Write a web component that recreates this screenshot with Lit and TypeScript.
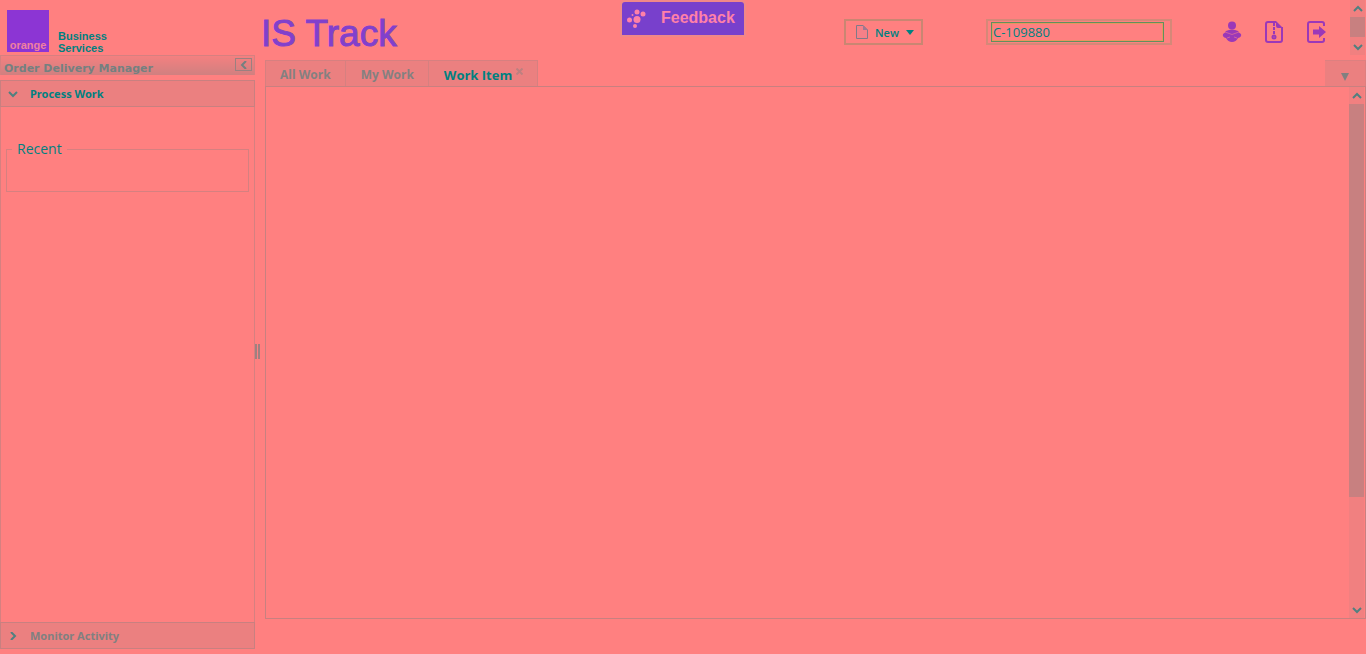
import { LitElement, html, css, svg } from "lit";
import { customElement, state } from "lit/decorators.js";
import { classMap } from "lit/directives/class-map.js";

const chevrons: Record<string, string> = {
  up: "M1 6L5 2L9 6",
  down: "M1 2L5 6L9 2",
  right: "M3 0L7 4L3 8",
  left: "M7 0L3 4L7 8",
};

const chevron = (dir: string) => html`
  <svg width="10" height="8" viewBox="0 0 10 8" aria-hidden="true">
    ${svg`<path d=${chevrons[dir]} fill="none" stroke="currentColor" stroke-width="2" />`}
  </svg>
`;

@customElement("scroll-rail")
export class ScrollRail extends LitElement {
  static styles = css`
    :host {
      display: flex;
      flex-direction: column;
      width: 15px;
      background: #f18080;
      color: #508080;
    }
    .arrow {
      display: flex;
      align-items: center;
      justify-content: center;
      height: 17px;
      flex: none;
      padding: 0;
      border: 0;
      background: none;
      color: inherit;
    }
    .track {
      flex: 1;
      display: flex;
      flex-direction: column;
    }
    .thumb {
      height: var(--thumb, 100%);
      background: #c88080;
    }
  `;

  render() {
    return html`
      <button class="arrow" aria-label="Scroll up">${chevron("up")}</button>
      <div class="track"><div class="thumb"></div></div>
      <button class="arrow" aria-label="Scroll down">${chevron("down")}</button>
    `;
  }
}

@customElement("app-root")
export class AppRoot extends LitElement {
  static styles = css`
    :host {
      display: flex;
      flex-direction: column;
      position: relative;
      box-sizing: border-box;
      height: 100vh;
      overflow: hidden;
      background: #ff8080;
      color: #008080;
      font-family: "Open Sans", "Noto Sans", sans-serif;
      font-size: 12px;
      --line: #d68080;
      --bar: #eb8080;
      --violet: #8c35d4;
    }
    * {
      box-sizing: border-box;
    }
    svg {
      display: block;
      flex: none;
    }
    button,
    input {
      font: inherit;
      color: inherit;
      margin: 0;
    }
    .header {
      display: flex;
      height: 55px;
      flex: none;
      padding-right: 1px;
    }
    .brand {
      display: flex;
      gap: 9px;
      width: 260px;
      padding: 10px 0 0 7px;
      font: bold 11px/12px "Liberation Sans", sans-serif;
    }
    .logo {
      display: flex;
      align-items: flex-end;
      justify-content: center;
      width: 42px;
      height: 42px;
      background: var(--violet);
      color: #f080a0;
      padding-bottom: 1px;
    }
    .brand-name {
      padding-top: 20px;
    }
    .app-title {
      flex: 1;
      margin: 0;
      padding: 14px 0 0 1px;
      font: 37px/40px "Liberation Sans", sans-serif;
      color: #8140cc;
      -webkit-text-stroke: 1px #8140cc;
    }
    .feedback {
      position: absolute;
      top: 2px;
      left: 50%;
      transform: translateX(-50%);
      display: flex;
      align-items: center;
      width: 122px;
      height: 33px;
      padding: 0 0 2px 4px;
      gap: 15px;
      border: 0;
      border-radius: 3px 3px 0 0;
      background: #7840cc;
      color: #ff80a8;
      font: bold 16px/20px "Liberation Sans", sans-serif;
      box-shadow: 0 0 0 2px #f08888;
    }
    .new {
      display: flex;
      align-items: center;
      width: 79px;
      height: 26px;
      margin: 19px 63px 0 0;
      padding: 0 7px 0 10px;
      border: 2px solid #c98672;
      background: none;
      font-weight: 600;
      font-size: 11px;
    }
    .new-label {
      flex: 1;
      padding-left: 7px;
      text-align: left;
    }
    .search {
      width: 186px;
      height: 26px;
      margin-top: 19px;
      padding: 1px 5px 0 3px;
      border: 2px solid #d58878;
    }
    .search-input {
      display: block;
      width: 173px;
      height: 20px;
      padding: 0 1px;
      border: 1px solid #60905f;
      outline: 1px solid #e8945e;
      outline-offset: -2px;
      border-radius: 0;
      background: none;
      font-size: 13px;
      line-height: 18px;
    }
    .tools {
      display: flex;
      gap: 22px;
      padding: 20px 24px 0 50px;
    }
    .tool {
      width: 20px;
      height: 24px;
      padding: 0;
      border: 0;
      background: none;
      color: #9b38b8;
    }
    .header-rail {
      --thumb: 20px;
    }
    .workspace {
      display: flex;
      flex: 1;
      min-height: 0;
    }
    .sidebar {
      display: flex;
      flex-direction: column;
      width: 255px;
      padding-bottom: 5px;
    }
    .role {
      display: flex;
      justify-content: space-between;
      height: 20px;
      flex: none;
      margin-bottom: 5px;
      padding: 2px 2px 0 3px;
      border: 1px solid var(--line);
      border-bottom: 0;
      background: linear-gradient(#f48080, #d08080);
      color: #748080;
      font: bold 11px/21px "DejaVu Sans", sans-serif;
    }
    .collapse {
      display: flex;
      align-items: center;
      justify-content: center;
      width: 17px;
      height: 13px;
      padding: 0;
      border: 1px solid #9b8080;
      background: none;
    }
    .section {
      display: flex;
      align-items: center;
      gap: 12px;
      width: 100%;
      height: 27px;
      flex: none;
      padding: 0 7px;
      border: 1px solid #c88080;
      background: var(--bar);
      color: #808080;
      font-family: "Noto Sans", "Open Sans", sans-serif;
      font-weight: bold;
      font-size: 11px;
    }
    .section.open {
      color: #008080;
    }
    .section svg {
      color: #508080;
    }
    .section-body {
      flex: 1;
      padding: 31px 5px 0;
      border: solid var(--line);
      border-width: 0 1px;
    }
    .recent {
      height: 54px;
      margin: 0;
      padding: 0 5px;
      border: 1px solid var(--line);
    }
    .recent-title {
      padding: 0 5px;
      font-size: 14px;
      line-height: 22px;
    }
    .splitter {
      display: flex;
      align-items: center;
      gap: 1px;
      width: 10px;
      padding-bottom: 7px;
    }
    .grip {
      width: 2px;
      height: 15px;
      background: #a08080;
    }
    .main {
      display: flex;
      flex-direction: column;
      flex: 1;
      min-width: 0;
      padding: 5px 0 35px;
    }
    .tabs {
      display: flex;
      height: 26px;
      flex: none;
    }
    .tab {
      display: flex;
      align-items: center;
      padding: 2px 14px 0 15px;
      border: 1px solid #d68080;
      border-width: 1px 1px 0 0;
      background: var(--bar);
      color: #848080;
      font-weight: bold;
      font-size: 12px;
    }
    .tab:first-child {
      padding-left: 14px;
      border-left-width: 1px;
    }
    .tab.active {
      color: #008080;
      font-size: 13px;
    }
    .close {
      margin: 0 0 6px 4px;
      color: #bd8080;
    }
    .tab-menu {
      width: 41px;
      margin-left: auto;
      padding: 6px 0 0;
      border: 1px solid #dd8080;
      border-width: 1px 1px 0 0;
      background: var(--bar);
      color: #808080;
      display: flex;
      align-items: center;
      justify-content: center;
    }
    .panel {
      display: flex;
      justify-content: flex-end;
      flex: 1;
      padding-right: 1px;
      border: 1px solid #c88080;
    }
    .panel-rail {
      --thumb: 79%;
    }
  `;

  @state() private active = "Work Item";

  render() {
    return html`
      <header class="header">
        <div class="brand">
          <div class="logo">orange</div>
          <div class="brand-name">Business<br />Services</div>
        </div>
        <h1 class="app-title">IS Track</h1>
        <button class="new">
          <svg width="12" height="14" viewBox="0 0 12 14">
            <path d="M.5 .5H7L11.5 5V13.5H.5Z" fill="#f58088" stroke="#807a88" />
            <path d="M7 0V5H12Z" fill="#a07890" />
          </svg>
          <span class="new-label">New</span>
          <svg width="8" height="5" viewBox="0 0 8 5">
            <path d="M0 0H8L4 5Z" fill="currentColor" />
          </svg>
        </button>
        <div class="search">
          <input class="search-input" aria-label="Search" value="C-109880" />
        </div>
        <nav class="tools" aria-label="Account">
          <button class="tool" aria-label="Profile">
            <svg width="20" height="24" viewBox="0 0 20 24" fill="currentColor">
              <circle cx="10" cy="5.500" r="4" />
              <path d="M4 11Q10 8 16 11Q17 13 19 14Q20 17 16 18Q14 22 10 22Q6 22 4 18Q0 17 1 14Q3 13 4 11Z" />
              <path d="M3 12L10 14.500L17 12M5 18L8 17M15 18L12 17" fill="none" stroke="#d060a0" />
            </svg>
          </button>
          <button class="tool" aria-label="Archive">
            <svg width="20" height="24" viewBox="0 0 20 24" fill="none" stroke="currentColor">
              <path d="M12 2H4Q2 2 2 4V20Q2 22 4 22H16Q18 22 18 20V7" stroke-width="2" />
              <path d="M12 1L19 8H14Q12 8 12 6Z" fill="currentColor" stroke="none" />
              <path d="M10 3V15" stroke-width="2" stroke-dasharray="3 1" />
              <circle cx="10" cy="17" r="1.500" stroke-width="2" />
            </svg>
          </button>
          <button class="tool" aria-label="Log out">
            <svg width="20" height="24" viewBox="0 0 20 24" fill="none" stroke="currentColor" stroke-width="2">
              <path d="M18 6V4Q18 2 16 2H4Q2 2 2 4V20Q2 22 4 22H16Q18 22 18 20V18" />
              <path d="M7 9.500H13V6L20 12L13 18V14.500H7Z" fill="currentColor" stroke="none" />
            </svg>
          </button>
        </nav>
        <scroll-rail class="header-rail"></scroll-rail>
      </header>
      <div class="workspace">
        <aside class="sidebar">
          <div class="role">
            <span>Order Delivery Manager</span>
            <button class="collapse" aria-label="Collapse">${chevron("left")}</button>
          </div>
          <button class="section open">${chevron("down")}<span>Process Work</span></button>
          <div class="section-body">
            <fieldset class="recent"><legend class="recent-title">Recent</legend></fieldset>
          </div>
          <button class="section">${chevron("right")}<span>Monitor Activity</span></button>
        </aside>
        <div class="splitter"><span class="grip"></span><span class="grip"></span></div>
        <main class="main">
          <div class="tabs" role="tablist">
            ${["All Work", "My Work", "Work Item"].map(
              (name) => html`<button
                role="tab"
                class=${classMap({ tab: true, active: name === this.active })}
                @click=${() => (this.active = name)}
              >
                ${name}
                ${name === "Work Item"
                  ? html`<svg class="close" width="7" height="7" viewBox="0 0 7 7">
                      <path d="M.5 .5L6.500 6.500M6.500 .5L.5 6.500" stroke="currentColor" stroke-width="2" />
                    </svg>`
                  : ""}
              </button>`
            )}
            <button class="tab-menu" aria-label="Tab list">
              <svg width="8" height="8" viewBox="0 0 8 8"><path d="M0 0H8L4 8Z" fill="currentColor" /></svg>
            </button>
          </div>
          <section class="panel"><scroll-rail class="panel-rail"></scroll-rail></section>
        </main>
      </div>
      <button class="feedback">
        <svg width="20" height="20" viewBox="0 0 20 20" fill="currentColor">
          <circle cx="3.500" cy="12" r="2.500" />
          <circle cx="11" cy="4" r="2.500" />
          <circle cx="17" cy="6" r="2.500" />
          <circle cx="11" cy="11.500" r="3.500" />
          <circle cx="9" cy="18" r="2" />
          <circle cx="6.500" cy="7" r="1" />
        </svg>
        <span>Feedback</span>
      </button>
    `;
  }
}
